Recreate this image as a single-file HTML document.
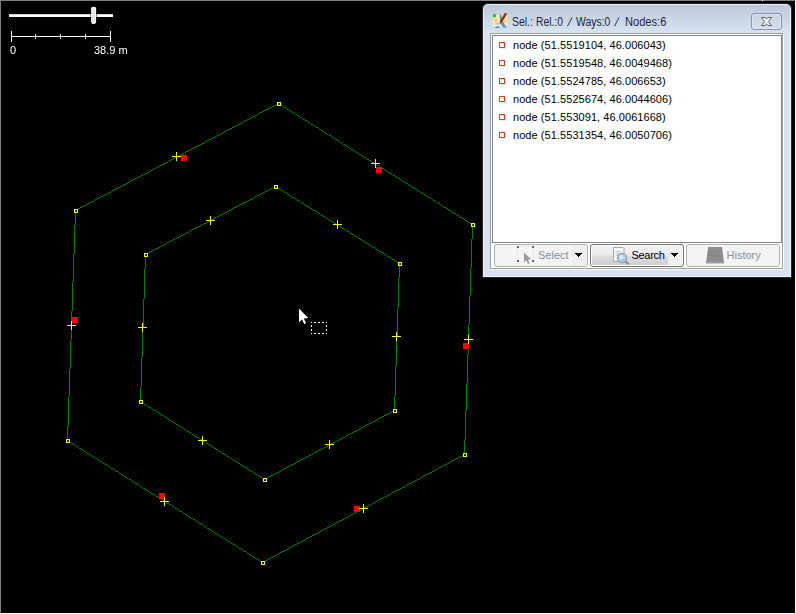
<!DOCTYPE html>
<html><head><meta charset="utf-8"><title>JOSM selection</title>
<style>
html,body{margin:0;padding:0;background:#000;}
body{width:796px;height:614px;position:relative;overflow:hidden;font-family:"Liberation Sans",sans-serif;}
.a{position:absolute;}
.map{position:absolute;left:0;top:0;}
.t11{font-size:11px;line-height:13px;white-space:nowrap;will-change:transform;}
/* frame borders */
#bt{left:0;top:0;width:795px;height:1px;background:#7d7d7d;}
#bl{left:0;top:0;width:1px;height:613px;background:#7d7d7d;}
#br{left:795px;top:0;width:1px;height:614px;background:#fff;}
#bb{left:0;top:613px;width:796px;height:1px;background:#fff;}
/* slider */
#trk{left:9px;top:14px;width:104px;height:3px;background:#fff;border-top:1px solid #d4d4d4;box-sizing:border-box;}
.w{background:#fff;}
/* dialog */
#win{left:482px;top:3px;width:310px;height:275px;background:#2b2b2b;border-radius:6px 6px 0 0;}
#hl{left:1px;top:1px;width:308px;height:273px;background:linear-gradient(#e4e7f2,#ebf1fa 12px);border-radius:5px 5px 0 0;}
#fr{left:1px;top:1px;width:306px;height:271px;border-radius:4px 4px 0 0;background:linear-gradient(#bccadb 0px,#c3d0e0 8px,#d6e3f2 28px,#d6e3f2 100%);}
#title{left:512px;top:14px;font-size:12px;line-height:16px;color:#20283c;white-space:nowrap;}
#title span{position:absolute;top:0;display:inline-block;transform-origin:0 0;}
#close{left:751px;top:13px;width:31px;height:17px;box-sizing:border-box;border:1px solid #8a90b4;border-radius:3px;background:linear-gradient(#c9d4e3,#d3deec);box-shadow:inset 0 0 0 1px rgba(255,255,255,.35);}
#etw{left:491px;top:34px;width:293px;height:236px;background:#fff;}
#etg{left:490px;top:33px;width:293px;height:236px;box-sizing:border-box;border:1px solid #a0a0a0;background:#fff;}
#sp{left:492px;top:35px;width:290px;height:208px;box-sizing:border-box;border:1px solid #828790;background:#fff;}
.row{left:493px;width:288px;height:18px;}
.row i{position:absolute;left:6px;top:6px;width:6px;height:6px;box-sizing:border-box;border:1px solid #de3a17;background:#fff;box-shadow:1px 1px 0 rgba(120,140,140,.18);}
.row span{position:absolute;left:20px;top:3px;font-size:11px;line-height:13px;color:#000;white-space:nowrap;letter-spacing:0.06px;}
.btn{top:244px;width:94px;height:23px;box-sizing:border-box;border-radius:3px;font-size:11px;line-height:13px;}
.dis{border:1px solid #adb2b5;background:#f4f4f4;color:#8790a6;}
.dis .arr{position:absolute;right:0;top:0;width:15px;height:21px;background:#efefef;border-radius:0 2px 2px 0;}
#bsearch{border:1px solid #707070;background:#f0f0f0;color:#000;box-shadow:inset 0 0 0 1px #fbfbfb;}
#bsearch .g{position:absolute;left:1px;top:1px;width:76px;height:19px;background:linear-gradient(#f2f2f2 0,#ebebeb 9px,#dddddd 10px,#cfcfcf 19px);}
.btn span{position:absolute;top:4px;white-space:nowrap;}
</style></head><body>
<svg class="map" width="796" height="614" viewBox="0 0 796 614" shape-rendering="crispEdges">
<path d="M278 103h1v1h-1zM276 104h2v1h-2zM279 104h2v1h-2zM274 105h2v1h-2zM281 105h2v1h-2zM272 106h2v1h-2zM283 106h1v1h-1zM270 107h2v1h-2zM284 107h2v1h-2zM268 108h2v1h-2zM286 108h1v1h-1zM266 109h2v1h-2zM287 109h2v1h-2zM264 110h2v1h-2zM289 110h2v1h-2zM262 111h2v1h-2zM291 111h1v1h-1zM260 112h2v1h-2zM292 112h2v1h-2zM259 113h1v1h-1zM294 113h1v1h-1zM257 114h2v1h-2zM295 114h2v1h-2zM255 115h2v1h-2zM297 115h2v1h-2zM253 116h2v1h-2zM299 116h1v1h-1zM251 117h2v1h-2zM300 117h2v1h-2zM249 118h2v1h-2zM302 118h1v1h-1zM247 119h2v1h-2zM303 119h2v1h-2zM245 120h2v1h-2zM305 120h2v1h-2zM243 121h2v1h-2zM307 121h1v1h-1zM242 122h1v1h-1zM308 122h2v1h-2zM240 123h2v1h-2zM310 123h1v1h-1zM238 124h2v1h-2zM311 124h2v1h-2zM236 125h2v1h-2zM313 125h2v1h-2zM234 126h2v1h-2zM315 126h1v1h-1zM232 127h2v1h-2zM316 127h2v1h-2zM230 128h2v1h-2zM318 128h1v1h-1zM228 129h2v1h-2zM319 129h2v1h-2zM226 130h2v1h-2zM321 130h2v1h-2zM224 131h2v1h-2zM323 131h1v1h-1zM223 132h1v1h-1zM324 132h2v1h-2zM221 133h2v1h-2zM326 133h1v1h-1zM219 134h2v1h-2zM327 134h2v1h-2zM217 135h2v1h-2zM329 135h2v1h-2zM215 136h2v1h-2zM331 136h1v1h-1zM213 137h2v1h-2zM332 137h2v1h-2zM211 138h2v1h-2zM334 138h1v1h-1zM209 139h2v1h-2zM335 139h2v1h-2zM207 140h2v1h-2zM337 140h2v1h-2zM205 141h2v1h-2zM339 141h1v1h-1zM204 142h1v1h-1zM340 142h2v1h-2zM202 143h2v1h-2zM342 143h1v1h-1zM200 144h2v1h-2zM343 144h2v1h-2zM198 145h2v1h-2zM345 145h2v1h-2zM196 146h2v1h-2zM347 146h1v1h-1zM194 147h2v1h-2zM348 147h2v1h-2zM192 148h2v1h-2zM350 148h1v1h-1zM190 149h2v1h-2zM351 149h2v1h-2zM188 150h2v1h-2zM353 150h2v1h-2zM186 151h2v1h-2zM355 151h1v1h-1zM185 152h1v1h-1zM356 152h2v1h-2zM183 153h2v1h-2zM358 153h1v1h-1zM181 154h2v1h-2zM359 154h2v1h-2zM179 155h2v1h-2zM361 155h2v1h-2zM177 156h2v1h-2zM363 156h1v1h-1zM175 157h2v1h-2zM364 157h2v1h-2zM173 158h2v1h-2zM366 158h1v1h-1zM171 159h2v1h-2zM367 159h2v1h-2zM169 160h2v1h-2zM369 160h2v1h-2zM168 161h1v1h-1zM371 161h1v1h-1zM166 162h2v1h-2zM372 162h2v1h-2zM164 163h2v1h-2zM374 163h2v1h-2zM162 164h2v1h-2zM376 164h1v1h-1zM160 165h2v1h-2zM377 165h2v1h-2zM158 166h2v1h-2zM379 166h1v1h-1zM156 167h2v1h-2zM380 167h2v1h-2zM154 168h2v1h-2zM382 168h2v1h-2zM152 169h2v1h-2zM384 169h1v1h-1zM150 170h2v1h-2zM385 170h2v1h-2zM149 171h1v1h-1zM387 171h1v1h-1zM147 172h2v1h-2zM388 172h2v1h-2zM145 173h2v1h-2zM390 173h2v1h-2zM143 174h2v1h-2zM392 174h1v1h-1zM141 175h2v1h-2zM393 175h2v1h-2zM139 176h2v1h-2zM395 176h1v1h-1zM137 177h2v1h-2zM396 177h2v1h-2zM135 178h2v1h-2zM398 178h2v1h-2zM133 179h2v1h-2zM400 179h1v1h-1zM131 180h2v1h-2zM401 180h2v1h-2zM130 181h1v1h-1zM403 181h1v1h-1zM128 182h2v1h-2zM404 182h2v1h-2zM126 183h2v1h-2zM406 183h2v1h-2zM124 184h2v1h-2zM408 184h1v1h-1zM122 185h2v1h-2zM409 185h2v1h-2zM120 186h2v1h-2zM275 186h1v1h-1zM411 186h1v1h-1zM118 187h2v1h-2zM273 187h2v1h-2zM276 187h2v1h-2zM412 187h2v1h-2zM116 188h2v1h-2zM271 188h2v1h-2zM278 188h2v1h-2zM414 188h2v1h-2zM114 189h2v1h-2zM269 189h2v1h-2zM280 189h1v1h-1zM416 189h1v1h-1zM112 190h2v1h-2zM267 190h2v1h-2zM281 190h2v1h-2zM417 190h2v1h-2zM111 191h1v1h-1zM265 191h2v1h-2zM283 191h1v1h-1zM419 191h1v1h-1zM109 192h2v1h-2zM263 192h2v1h-2zM284 192h2v1h-2zM420 192h2v1h-2zM107 193h2v1h-2zM261 193h2v1h-2zM286 193h2v1h-2zM422 193h2v1h-2zM105 194h2v1h-2zM259 194h2v1h-2zM288 194h1v1h-1zM424 194h1v1h-1zM103 195h2v1h-2zM257 195h2v1h-2zM289 195h2v1h-2zM425 195h2v1h-2zM101 196h2v1h-2zM255 196h2v1h-2zM291 196h1v1h-1zM427 196h1v1h-1zM99 197h2v1h-2zM254 197h1v1h-1zM292 197h2v1h-2zM428 197h2v1h-2zM97 198h2v1h-2zM252 198h2v1h-2zM294 198h2v1h-2zM430 198h2v1h-2zM95 199h2v1h-2zM250 199h2v1h-2zM296 199h1v1h-1zM432 199h1v1h-1zM94 200h1v1h-1zM248 200h2v1h-2zM297 200h2v1h-2zM433 200h2v1h-2zM92 201h2v1h-2zM246 201h2v1h-2zM299 201h1v1h-1zM435 201h1v1h-1zM90 202h2v1h-2zM244 202h2v1h-2zM300 202h2v1h-2zM436 202h2v1h-2zM88 203h2v1h-2zM242 203h2v1h-2zM302 203h2v1h-2zM438 203h2v1h-2zM86 204h2v1h-2zM240 204h2v1h-2zM304 204h1v1h-1zM440 204h1v1h-1zM84 205h2v1h-2zM238 205h2v1h-2zM305 205h2v1h-2zM441 205h2v1h-2zM82 206h2v1h-2zM236 206h2v1h-2zM307 206h2v1h-2zM443 206h1v1h-1zM80 207h2v1h-2zM234 207h2v1h-2zM309 207h1v1h-1zM444 207h2v1h-2zM78 208h2v1h-2zM232 208h2v1h-2zM310 208h2v1h-2zM446 208h2v1h-2zM76 209h2v1h-2zM231 209h1v1h-1zM312 209h1v1h-1zM448 209h1v1h-1zM75 210h1v15h-1zM229 210h2v1h-2zM313 210h2v1h-2zM449 210h2v1h-2zM227 211h2v1h-2zM315 211h2v1h-2zM451 211h1v1h-1zM225 212h2v1h-2zM317 212h1v1h-1zM452 212h2v1h-2zM223 213h2v1h-2zM318 213h2v1h-2zM454 213h2v1h-2zM221 214h2v1h-2zM320 214h1v1h-1zM456 214h1v1h-1zM219 215h2v1h-2zM321 215h2v1h-2zM457 215h2v1h-2zM217 216h2v1h-2zM323 216h2v1h-2zM459 216h1v1h-1zM215 217h2v1h-2zM325 217h1v1h-1zM460 217h2v1h-2zM213 218h2v1h-2zM326 218h2v1h-2zM462 218h2v1h-2zM211 219h2v1h-2zM328 219h1v1h-1zM464 219h1v1h-1zM210 220h1v1h-1zM329 220h2v1h-2zM465 220h2v1h-2zM208 221h2v1h-2zM331 221h2v1h-2zM467 221h1v1h-1zM206 222h2v1h-2zM333 222h1v1h-1zM468 222h2v1h-2zM204 223h2v1h-2zM334 223h2v1h-2zM470 223h2v1h-2zM202 224h2v1h-2zM336 224h2v1h-2zM472 224h1v15h-1zM74 225h1v29h-1zM200 225h2v1h-2zM338 225h1v1h-1zM198 226h2v1h-2zM339 226h2v1h-2zM196 227h2v1h-2zM341 227h1v1h-1zM194 228h2v1h-2zM342 228h2v1h-2zM192 229h2v1h-2zM344 229h2v1h-2zM190 230h2v1h-2zM346 230h1v1h-1zM189 231h1v1h-1zM347 231h2v1h-2zM187 232h2v1h-2zM349 232h1v1h-1zM185 233h2v1h-2zM350 233h2v1h-2zM183 234h2v1h-2zM352 234h2v1h-2zM181 235h2v1h-2zM354 235h1v1h-1zM179 236h2v1h-2zM355 236h2v1h-2zM177 237h2v1h-2zM357 237h1v1h-1zM175 238h2v1h-2zM358 238h2v1h-2zM173 239h2v1h-2zM360 239h2v1h-2zM471 239h1v29h-1zM171 240h2v1h-2zM362 240h1v1h-1zM169 241h2v1h-2zM363 241h2v1h-2zM167 242h2v1h-2zM365 242h1v1h-1zM166 243h1v1h-1zM366 243h2v1h-2zM164 244h2v1h-2zM368 244h2v1h-2zM162 245h2v1h-2zM370 245h1v1h-1zM160 246h2v1h-2zM371 246h2v1h-2zM158 247h2v1h-2zM373 247h2v1h-2zM156 248h2v1h-2zM375 248h1v1h-1zM154 249h2v1h-2zM376 249h2v1h-2zM152 250h2v1h-2zM378 250h1v1h-1zM150 251h2v1h-2zM379 251h2v1h-2zM148 252h2v1h-2zM381 252h2v1h-2zM146 253h2v1h-2zM383 253h1v1h-1zM73 254h1v28h-1zM145 254h1v15h-1zM384 254h2v1h-2zM386 255h1v1h-1zM387 256h2v1h-2zM389 257h2v1h-2zM391 258h1v1h-1zM392 259h2v1h-2zM394 260h1v1h-1zM395 261h2v1h-2zM397 262h2v1h-2zM399 263h1v15h-1zM470 268h1v28h-1zM144 269h1v30h-1zM398 278h1v30h-1zM72 282h1v29h-1zM469 296h1v29h-1zM143 299h1v29h-1zM397 308h1v29h-1zM71 311h1v29h-1zM468 325h1v29h-1zM142 328h1v29h-1zM396 337h1v29h-1zM70 340h1v29h-1zM467 354h1v29h-1zM141 357h1v30h-1zM395 366h1v30h-1zM69 369h1v28h-1zM466 383h1v28h-1zM140 387h1v15h-1zM394 396h1v15h-1zM68 397h1v29h-1zM141 402h2v1h-2zM143 403h1v1h-1zM144 404h2v1h-2zM146 405h2v1h-2zM148 406h1v1h-1zM149 407h2v1h-2zM151 408h1v1h-1zM152 409h2v1h-2zM154 410h2v1h-2zM156 411h1v1h-1zM392 411h2v1h-2zM465 411h1v29h-1zM157 412h2v1h-2zM390 412h2v1h-2zM159 413h1v1h-1zM388 413h2v1h-2zM160 414h2v1h-2zM386 414h2v1h-2zM162 415h2v1h-2zM384 415h2v1h-2zM164 416h1v1h-1zM382 416h2v1h-2zM165 417h2v1h-2zM380 417h2v1h-2zM167 418h1v1h-1zM378 418h2v1h-2zM168 419h2v1h-2zM377 419h1v1h-1zM170 420h1v1h-1zM375 420h2v1h-2zM171 421h2v1h-2zM373 421h2v1h-2zM173 422h2v1h-2zM371 422h2v1h-2zM175 423h1v1h-1zM369 423h2v1h-2zM176 424h2v1h-2zM367 424h2v1h-2zM178 425h1v1h-1zM365 425h2v1h-2zM67 426h1v15h-1zM179 426h2v1h-2zM363 426h2v1h-2zM181 427h2v1h-2zM362 427h1v1h-1zM183 428h1v1h-1zM360 428h2v1h-2zM184 429h2v1h-2zM358 429h2v1h-2zM186 430h1v1h-1zM356 430h2v1h-2zM187 431h2v1h-2zM354 431h2v1h-2zM189 432h2v1h-2zM352 432h2v1h-2zM191 433h1v1h-1zM350 433h2v1h-2zM192 434h2v1h-2zM348 434h2v1h-2zM194 435h1v1h-1zM346 435h2v1h-2zM195 436h2v1h-2zM345 436h1v1h-1zM197 437h2v1h-2zM343 437h2v1h-2zM199 438h1v1h-1zM341 438h2v1h-2zM200 439h2v1h-2zM339 439h2v1h-2zM202 440h1v1h-1zM337 440h2v1h-2zM464 440h1v15h-1zM68 441h2v1h-2zM203 441h2v1h-2zM335 441h2v1h-2zM70 442h1v1h-1zM205 442h1v1h-1zM333 442h2v1h-2zM71 443h2v1h-2zM206 443h2v1h-2zM331 443h2v1h-2zM73 444h2v1h-2zM208 444h2v1h-2zM329 444h2v1h-2zM75 445h1v1h-1zM210 445h1v1h-1zM328 445h1v1h-1zM76 446h2v1h-2zM211 446h2v1h-2zM326 446h2v1h-2zM78 447h1v1h-1zM213 447h1v1h-1zM324 447h2v1h-2zM79 448h2v1h-2zM214 448h2v1h-2zM322 448h2v1h-2zM81 449h2v1h-2zM216 449h2v1h-2zM320 449h2v1h-2zM83 450h1v1h-1zM218 450h1v1h-1zM318 450h2v1h-2zM84 451h2v1h-2zM219 451h2v1h-2zM316 451h2v1h-2zM86 452h1v1h-1zM221 452h1v1h-1zM314 452h2v1h-2zM87 453h2v1h-2zM222 453h2v1h-2zM313 453h1v1h-1zM89 454h2v1h-2zM224 454h2v1h-2zM311 454h2v1h-2zM91 455h1v1h-1zM226 455h1v1h-1zM309 455h2v1h-2zM462 455h2v1h-2zM92 456h2v1h-2zM227 456h2v1h-2zM307 456h2v1h-2zM460 456h2v1h-2zM94 457h1v1h-1zM229 457h1v1h-1zM305 457h2v1h-2zM458 457h2v1h-2zM95 458h2v1h-2zM230 458h2v1h-2zM303 458h2v1h-2zM456 458h2v1h-2zM97 459h2v1h-2zM232 459h1v1h-1zM301 459h2v1h-2zM454 459h2v1h-2zM99 460h1v1h-1zM233 460h2v1h-2zM299 460h2v1h-2zM452 460h2v1h-2zM100 461h2v1h-2zM235 461h2v1h-2zM297 461h2v1h-2zM450 461h2v1h-2zM102 462h1v1h-1zM237 462h1v1h-1zM296 462h1v1h-1zM449 462h1v1h-1zM103 463h2v1h-2zM238 463h2v1h-2zM294 463h2v1h-2zM447 463h2v1h-2zM105 464h2v1h-2zM240 464h1v1h-1zM292 464h2v1h-2zM445 464h2v1h-2zM107 465h1v1h-1zM241 465h2v1h-2zM290 465h2v1h-2zM443 465h2v1h-2zM108 466h2v1h-2zM243 466h2v1h-2zM288 466h2v1h-2zM441 466h2v1h-2zM110 467h1v1h-1zM245 467h1v1h-1zM286 467h2v1h-2zM439 467h2v1h-2zM111 468h2v1h-2zM246 468h2v1h-2zM284 468h2v1h-2zM437 468h2v1h-2zM113 469h2v1h-2zM248 469h1v1h-1zM282 469h2v1h-2zM436 469h1v1h-1zM115 470h1v1h-1zM249 470h2v1h-2zM281 470h1v1h-1zM434 470h2v1h-2zM116 471h2v1h-2zM251 471h2v1h-2zM279 471h2v1h-2zM432 471h2v1h-2zM118 472h1v1h-1zM253 472h1v1h-1zM277 472h2v1h-2zM430 472h2v1h-2zM119 473h2v1h-2zM254 473h2v1h-2zM275 473h2v1h-2zM428 473h2v1h-2zM121 474h2v1h-2zM256 474h1v1h-1zM273 474h2v1h-2zM426 474h2v1h-2zM123 475h1v1h-1zM257 475h2v1h-2zM271 475h2v1h-2zM424 475h2v1h-2zM124 476h2v1h-2zM259 476h2v1h-2zM269 476h2v1h-2zM422 476h2v1h-2zM126 477h1v1h-1zM261 477h1v1h-1zM267 477h2v1h-2zM421 477h1v1h-1zM127 478h2v1h-2zM262 478h2v1h-2zM265 478h2v1h-2zM419 478h2v1h-2zM129 479h2v1h-2zM264 479h1v1h-1zM417 479h2v1h-2zM131 480h1v1h-1zM415 480h2v1h-2zM132 481h2v1h-2zM413 481h2v1h-2zM134 482h1v1h-1zM411 482h2v1h-2zM135 483h2v1h-2zM409 483h2v1h-2zM137 484h2v1h-2zM407 484h2v1h-2zM139 485h1v1h-1zM406 485h1v1h-1zM140 486h2v1h-2zM404 486h2v1h-2zM142 487h1v1h-1zM402 487h2v1h-2zM143 488h2v1h-2zM400 488h2v1h-2zM145 489h2v1h-2zM398 489h2v1h-2zM147 490h1v1h-1zM396 490h2v1h-2zM148 491h2v1h-2zM394 491h2v1h-2zM150 492h1v1h-1zM392 492h2v1h-2zM151 493h2v1h-2zM391 493h1v1h-1zM153 494h2v1h-2zM389 494h2v1h-2zM155 495h1v1h-1zM387 495h2v1h-2zM156 496h2v1h-2zM385 496h2v1h-2zM158 497h1v1h-1zM383 497h2v1h-2zM159 498h2v1h-2zM381 498h2v1h-2zM161 499h2v1h-2zM379 499h2v1h-2zM163 500h1v1h-1zM378 500h1v1h-1zM164 501h2v1h-2zM376 501h2v1h-2zM166 502h1v1h-1zM374 502h2v1h-2zM167 503h2v1h-2zM372 503h2v1h-2zM169 504h2v1h-2zM370 504h2v1h-2zM171 505h1v1h-1zM368 505h2v1h-2zM172 506h2v1h-2zM366 506h2v1h-2zM174 507h1v1h-1zM364 507h2v1h-2zM175 508h2v1h-2zM363 508h1v1h-1zM177 509h2v1h-2zM361 509h2v1h-2zM179 510h1v1h-1zM359 510h2v1h-2zM180 511h2v1h-2zM357 511h2v1h-2zM182 512h1v1h-1zM355 512h2v1h-2zM183 513h2v1h-2zM353 513h2v1h-2zM185 514h2v1h-2zM351 514h2v1h-2zM187 515h1v1h-1zM349 515h2v1h-2zM188 516h2v1h-2zM348 516h1v1h-1zM190 517h1v1h-1zM346 517h2v1h-2zM191 518h2v1h-2zM344 518h2v1h-2zM193 519h2v1h-2zM342 519h2v1h-2zM195 520h1v1h-1zM340 520h2v1h-2zM196 521h2v1h-2zM338 521h2v1h-2zM198 522h1v1h-1zM336 522h2v1h-2zM199 523h2v1h-2zM335 523h1v1h-1zM201 524h2v1h-2zM333 524h2v1h-2zM203 525h1v1h-1zM331 525h2v1h-2zM204 526h2v1h-2zM329 526h2v1h-2zM206 527h1v1h-1zM327 527h2v1h-2zM207 528h2v1h-2zM325 528h2v1h-2zM209 529h2v1h-2zM323 529h2v1h-2zM211 530h1v1h-1zM321 530h2v1h-2zM212 531h2v1h-2zM320 531h1v1h-1zM214 532h1v1h-1zM318 532h2v1h-2zM215 533h2v1h-2zM316 533h2v1h-2zM217 534h2v1h-2zM314 534h2v1h-2zM219 535h1v1h-1zM312 535h2v1h-2zM220 536h2v1h-2zM310 536h2v1h-2zM222 537h1v1h-1zM308 537h2v1h-2zM223 538h2v1h-2zM306 538h2v1h-2zM225 539h2v1h-2zM305 539h1v1h-1zM227 540h1v1h-1zM303 540h2v1h-2zM228 541h2v1h-2zM301 541h2v1h-2zM230 542h1v1h-1zM299 542h2v1h-2zM231 543h2v1h-2zM297 543h2v1h-2zM233 544h2v1h-2zM295 544h2v1h-2zM235 545h1v1h-1zM293 545h2v1h-2zM236 546h2v1h-2zM291 546h2v1h-2zM238 547h1v1h-1zM290 547h1v1h-1zM239 548h2v1h-2zM288 548h2v1h-2zM241 549h2v1h-2zM286 549h2v1h-2zM243 550h1v1h-1zM284 550h2v1h-2zM244 551h2v1h-2zM282 551h2v1h-2zM246 552h1v1h-1zM280 552h2v1h-2zM247 553h2v1h-2zM278 553h2v1h-2zM249 554h2v1h-2zM277 554h1v1h-1zM251 555h1v1h-1zM275 555h2v1h-2zM252 556h2v1h-2zM273 556h2v1h-2zM254 557h1v1h-1zM271 557h2v1h-2zM255 558h2v1h-2zM269 558h2v1h-2zM257 559h2v1h-2zM267 559h2v1h-2zM259 560h1v1h-1zM265 560h2v1h-2zM260 561h2v1h-2zM263 561h2v1h-2zM262 562h1v1h-1z" fill="#008000"/>
<path d="M181 155h6v6h-6zM376 167h6v6h-6zM463 343h6v6h-6zM354 506h6v6h-6zM159 493h6v6h-6zM72 317h6v6h-6z" fill="#ff0000"/>
<path d="M371 163h9v1h-9zM375 159h1v9h-1zM464 339h9v1h-9zM468 335h1v9h-1zM359 508h9v1h-9zM363 504h1v9h-1zM160 501h9v1h-9zM164 497h1v9h-1zM67 325h9v1h-9zM71 321h1v9h-1zM172 156h9v1h-9zM176 152h1v9h-1zM333 224h9v1h-9zM337 220h1v9h-1zM392 336h9v1h-9zM396 332h1v9h-1zM325 444h9v1h-9zM329 440h1v9h-1zM198 440h9v1h-9zM202 436h1v9h-1zM138 327h9v1h-9zM142 323h1v9h-1zM206 220h9v1h-9zM210 216h1v9h-1z" fill="#ffff00"/>
<path d="M277 102h4v4h-4zM278 103v2h2v-2zM471 223h4v4h-4zM472 224v2h2v-2zM463 453h4v4h-4zM464 454v2h2v-2zM261 561h4v4h-4zM262 562v2h2v-2zM66 439h4v4h-4zM67 440v2h2v-2zM74 209h4v4h-4zM75 210v2h2v-2zM274 185h4v4h-4zM275 186v2h2v-2zM398 262h4v4h-4zM399 263v2h2v-2zM393 409h4v4h-4zM394 410v2h2v-2zM263 478h4v4h-4zM264 479v2h2v-2zM139 400h4v4h-4zM140 401v2h2v-2zM144 253h4v4h-4zM145 254v2h2v-2z" fill="#ffff00" fill-rule="evenodd"/>
<path d="M311 322h1v1h-1zM311 333h1v1h-1zM314 322h1v1h-1zM314 333h1v1h-1zM315 322h1v1h-1zM315 333h1v1h-1zM318 322h1v1h-1zM318 333h1v1h-1zM319 322h1v1h-1zM319 333h1v1h-1zM322 322h1v1h-1zM322 333h1v1h-1zM323 322h1v1h-1zM323 333h1v1h-1zM326 322h1v1h-1zM326 333h1v1h-1zM311 325h1v1h-1zM326 325h1v1h-1zM311 326h1v1h-1zM326 326h1v1h-1zM311 329h1v1h-1zM326 329h1v1h-1zM311 330h1v1h-1zM326 330h1v1h-1z" fill="#ffffff"/>
<path d="M299 308.500V322.300L302 319.600L304.200 324L306 323.200L303.900 318.400L308.300 317.900Z" fill="#ffffff" shape-rendering="geometricPrecision"/>
</svg>
<div id="bt" class="a"></div><div id="bl" class="a"></div><div id="br" class="a"></div><div id="bb" class="a"></div>
<div class="a w" style="left:762px;top:0;width:1px;height:1px"></div>
<!-- zoom slider -->
<div id="trk" class="a"></div>
<svg class="a" style="left:88px;top:4px" width="12" height="24" viewBox="0 0 12 24"><rect x="2.700" y="2.400" width="5.800" height="18" rx="2" fill="#000"/><rect x="3.100" y="2.800" width="5" height="17.100" rx="1.800" fill="#fdfdfd"/><rect x="4.200" y="4" width="2.800" height="14.700" rx=".8" fill="#e4e4e4"/></svg>
<!-- scale -->
<div class="a w" style="left:11px;top:36px;width:100px;height:1px"></div>
<div class="a w" style="left:11px;top:31px;width:1px;height:11px"></div>
<div class="a w" style="left:110px;top:31px;width:1px;height:11px"></div>
<div class="a w" style="left:35px;top:34px;width:1px;height:5px"></div>
<div class="a w" style="left:60px;top:34px;width:1px;height:5px"></div>
<div class="a w" style="left:85px;top:34px;width:1px;height:5px"></div>
<div class="a t11" style="left:10.200px;top:44px;color:#fff">0</div>
<div class="a t11" style="left:93.500px;top:44px;color:#fff">38.9 m</div>
<!-- selection dialog -->
<div id="win" class="a"><div id="hl" class="a"><div id="fr" class="a"></div></div></div>
<svg class="a" style="left:492px;top:13px" width="16" height="16" viewBox="0 0 16 16">
<path d="M1 2L15.300 1.500V13L9 14.500L1 13.500Z" fill="#fbe8a8"/>
<path d="M0.800 1h1.300l.4.800l.5-.8h1v3.200h-3.200z" fill="#35c23f"/>
<path d="M7.500 1.500L9.200 1.500L10.500 8L15 14.800L11 14.600L8.500 10.500L8 6Z" fill="#4f93ea"/>
<path d="M2.500 14L7 13.200L8.500 14.600L4.500 15.300Z" fill="#3f86e6"/>
<path d="M2.500 6.200h2.500M2.800 8.300h2.200" stroke="#eaa0a8" stroke-width="1" fill="none"/>
<path d="M3.500 10.800h3.500" stroke="#9fc0ee" stroke-width="1.400" fill="none"/>
<path d="M12 6.500l1.800 1l-.8 2.500" stroke="#f7d84e" stroke-width="1.700" fill="none"/>
<path d="M13 -0.400L15.200 0.900L9.800 9.800L7.600 8.500Z" fill="#8e3a10"/>
<path d="M7.600 8.500L9.800 9.800L7.700 11.300Z" fill="#d8452a"/>
</svg>
<div id="title" class="a"><span style="left:0px;transform:scaleX(.87)">Sel.:</span> <span style="left:24px;transform:scaleX(.86)">Rel.:0</span> <span style="left:55.500px;transform:skewX(-14deg);transform-origin:50% 50%">/</span> <span style="left:64px;transform:scaleX(.87)">Ways:0</span> <span style="left:103px;transform:skewX(-14deg);transform-origin:50% 50%">/</span> <span style="left:112.500px;transform:scaleX(.925)">Nodes:6</span></div>
<div id="close" class="a"></div>
<svg class="a" style="left:759px;top:15px" width="15" height="13" viewBox="0 0 15 13">
<path d="M2.500 2.500h3.600l1.400 1.700l1.400-1.700h3.600l-3.100 4l3.100 4h-3.600l-1.400-1.700l-1.400 1.700h-3.600l3.100-4z" fill="#fdfdfd" stroke="#4a4f5a" stroke-width=".9" stroke-linejoin="round"/>
</svg>
<div id="etw" class="a"></div><div id="etg" class="a"></div>
<div id="sp" class="a"></div>
<div class="a row" style="top:36px"><i></i><span>node (51.5519104, 46.006043)</span></div>
<div class="a row" style="top:54px"><i></i><span>node (51.5519548, 46.0049468)</span></div>
<div class="a row" style="top:72px"><i></i><span>node (51.5524785, 46.006653)</span></div>
<div class="a row" style="top:90px"><i></i><span>node (51.5525674, 46.0044606)</span></div>
<div class="a row" style="top:108px"><i></i><span>node (51.553091, 46.0061668)</span></div>
<div class="a row" style="top:126px"><i></i><span>node (51.5531354, 46.0050706)</span></div>
<!-- buttons -->
<div class="a btn dis" style="left:494px"><div class="arr"></div>
<svg class="a" style="left:22px;top:1px" width="18" height="20" viewBox="0 0 18 20" shape-rendering="crispEdges">
<path d="M0 0h2v2h-2zM15 0h2v2h-2zM0 14h2v2h-2zM15 14h2v2h-2z" fill="#636363"/>
<path d="M3 0h1v1h-1zM5 0h1v1h-1zM7 0h1v1h-1zM9 0h1v1h-1zM11 0h1v1h-1zM13 0h1v1h-1zM0 3h1v1h-1zM0 5h1v1h-1zM0 7h1v1h-1zM0 9h1v1h-1zM0 11h1v1h-1zM16 3h1v1h-1zM16 5h1v1h-1zM16 7h1v1h-1zM16 9h1v1h-1zM16 11h1v1h-1zM3 15h1v1h-1zM5 15h1v1h-1z" fill="#e3e3e3"/>
<path d="M7 6.5V16.2L9.4 14.2L11 18L12.6 17.3L11 13.6L14.3 13.4Z" fill="#9a9a9a" shape-rendering="geometricPrecision"/>
</svg>
<span style="left:43px">Select</span>
<svg class="a" style="left:80px;top:8px" width="7" height="4" viewBox="0 0 7 4" shape-rendering="crispEdges"><path d="M0 0h7v1h-7zM1 1h5v1h-5zM2 2h3v1h-3zM3 3h1v1h-1z" fill="#000"/></svg>
</div>
<div id="bsearch" class="a btn" style="left:590px"><div class="g"></div>
<svg class="a" style="left:20px;top:1px" width="20" height="20" viewBox="0 0 20 20">
<path d="M2.5 1.5h9.5l1 1v13h-10.500z" fill="#f6f6f6" stroke="#a9a9a9" stroke-width="1"/>
<path d="M4.500 5.500h6M4.500 7.500h6M4.500 9.500h4" stroke="#c9c9c9" stroke-width="1"/>
<path d="M14.300 15.300l2.700 2.200" stroke="#8c8c8c" stroke-width="2.200" stroke-linecap="round"/>
<circle cx="11" cy="12" r="4.600" fill="#a9c9ee" stroke="#9aa3ad" stroke-width="1.300"/>
<circle cx="10.300" cy="11.200" r="2.200" fill="#d6e7fa"/>
</svg>
<span style="left:40.500px;letter-spacing:-0.3px">Search</span>
<svg class="a" style="left:80px;top:8px" width="7" height="4" viewBox="0 0 7 4" shape-rendering="crispEdges"><path d="M0 0h7v1h-7zM1 1h5v1h-5zM2 2h3v1h-3zM3 3h1v1h-1z" fill="#000"/></svg>
</div>
<div class="a btn dis" style="left:686px">
<svg class="a" style="left:19px;top:2px" width="20" height="18" viewBox="0 0 20 18">
<path d="M2.200 0h13.800l2.100 16.200h-18.100z" fill="#8d8d8d"/>
<path d="M1.600 5h15M1.200 8.500h15.800" stroke="#858585" stroke-width="1"/>
<path d="M0.300 14.200h17.500l.3 2h-18.100z" fill="#9a9a9a"/>
</svg>
<span style="left:39.500px">History</span>
</div>
</body></html>
